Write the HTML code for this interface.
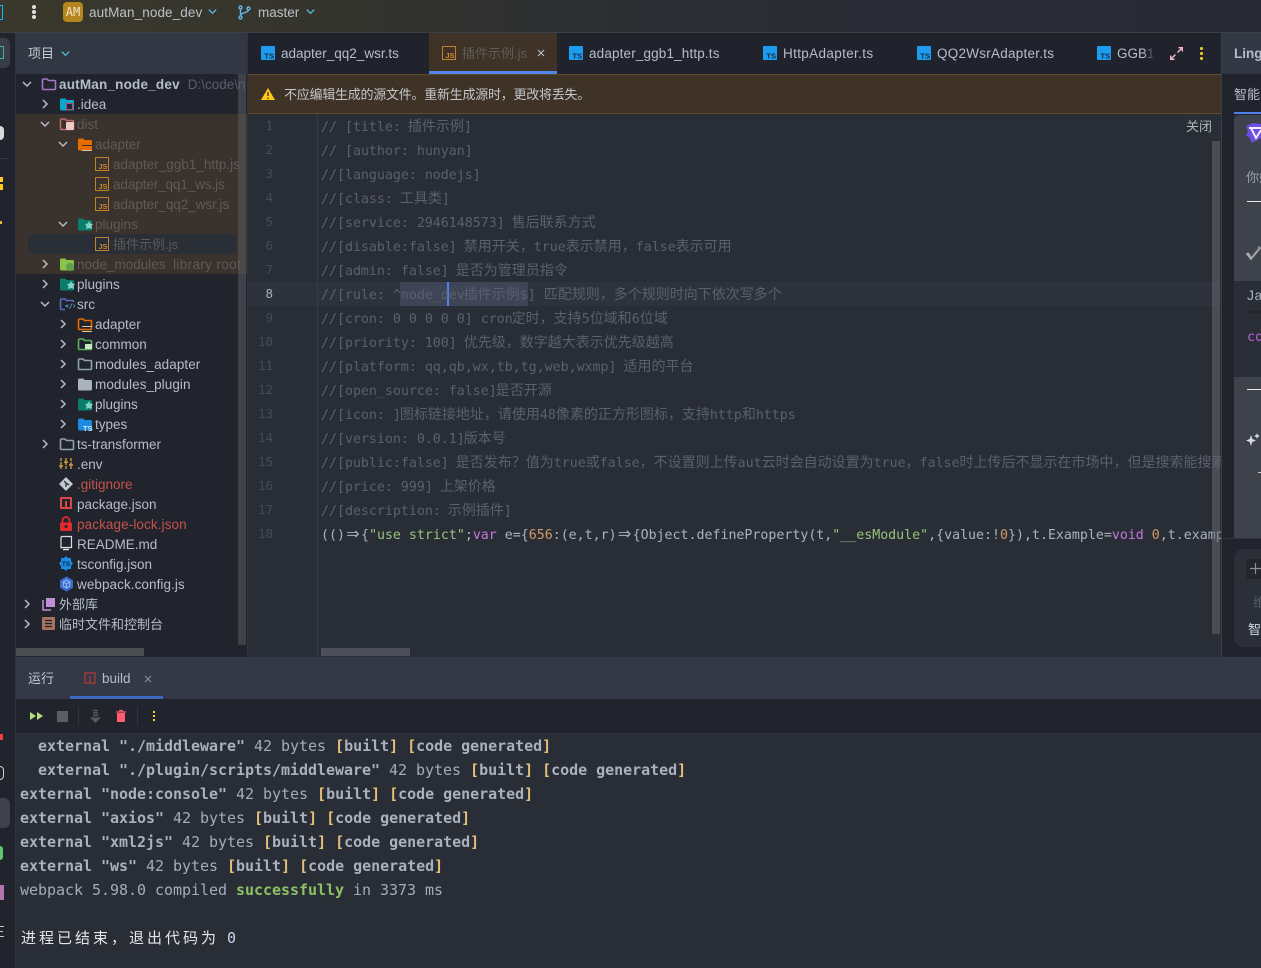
<!DOCTYPE html>
<html lang="zh"><head><meta charset="utf-8"><title>autMan_node_dev</title>
<style>
*{box-sizing:border-box;margin:0;padding:0}
html,body{width:1261px;height:968px;overflow:hidden;background:#21242c}
body{position:relative;font-family:"Liberation Sans","Noto Sans CJK SC",sans-serif;font-size:13.5px;color:#b6bdca}
.a{position:absolute}
.t{position:absolute;white-space:pre;height:22px;line-height:22px}
svg{position:absolute;display:block;overflow:visible}
.d{color:#5d5b59}
.red{color:#c4534c}
.cd{position:absolute;left:321px;margin-top:4px;height:24px;line-height:24px;white-space:pre;font-family:"DejaVu Sans Mono","Noto Sans CJK SC",monospace;font-size:13.28px;color:#5a606c}
.cd i{font-style:normal;font-family:"Noto Sans CJK SC",sans-serif;font-size:14px;line-height:0}
.cd i:first-of-type{margin-left:-1px}
.ar{display:inline-block;width:16px;text-align:center;font-family:"DejaVu Sans",sans-serif;font-size:16px;line-height:0}
.n{position:absolute;left:248px;width:25px;text-align:right;height:24px;line-height:24px;font-family:"DejaVu Sans Mono",monospace;font-size:12.5px;color:#464c58}
.con{position:absolute;left:20px;height:24px;line-height:24px;white-space:pre;font-family:"DejaVu Sans Mono","Noto Sans CJK SC",monospace;font-size:15px;letter-spacing:-.03px;color:#a5acb8}
.con b{color:#aab1bd}
.con u{text-decoration:none;font-weight:bold;color:#e5c07b}
.tab{position:absolute;top:43px;height:22px;line-height:22px;white-space:pre;color:#b6bdca;font-size:13.5px}
.s{color:#98c379}.k{color:#c678dd}.m{color:#d19a66}.p{color:#abb2bf}
</style></head><body>
<svg width="0" height="0" style="position:absolute">
<defs>
<symbol id="r" viewBox="0 0 12 12"><path d="M4 2l4 4-4 4" fill="none" stroke="#b6bdca" stroke-width="1.5"/></symbol>
<symbol id="v" viewBox="0 0 12 12"><path d="M2 4l4 4 4-4" fill="none" stroke="#b6bdca" stroke-width="1.5"/></symbol>
<symbol id="fo" viewBox="0 0 16 16"><path d="M1.5 4a1 1 0 0 1 1-1h3.5l1.5 1.500h6a1 1 0 0 1 1 1v7a1 1 0 0 1-1 1h-11a1 1 0 0 1-1-1z" fill="none" stroke="currentColor" stroke-width="1.6"/></symbol>
<symbol id="ff" viewBox="0 0 16 16"><path d="M1 4a1.500 1.500 0 0 1 1.500-1.500h3.700l1.500 1.500h5.800a1.500 1.500 0 0 1 1.500 1.500v7.500a1.500 1.500 0 0 1-1.500 1.500h-11a1.500 1.500 0 0 1-1.500-1.500z" fill="currentColor"/></symbol>
<symbol id="ts" viewBox="0 0 14 14"><rect width="14" height="14" rx="1" fill="#1c9cf0"/><text x="13" y="12.500" text-anchor="end" font-family="Liberation Sans" font-weight="bold" font-size="7.500" fill="#1b2a3a">TS</text></symbol>
<symbol id="js" viewBox="0 0 14 14"><rect x=".5" y=".5" width="13" height="13" fill="none" stroke="#c0802c"/><text x="12.500" y="12" text-anchor="end" font-family="Liberation Sans" font-weight="bold" font-size="7.500" fill="#c98a30">JS</text></symbol>
<symbol id="pl" viewBox="0 0 16 16"><path d="M1 4a1.500 1.500 0 0 1 1.500-1.500h3.700l1.500 1.500h5.800a1.500 1.500 0 0 1 1.500 1.500v7.500a1.500 1.500 0 0 1-1.500 1.500h-11a1.500 1.500 0 0 1-1.500-1.500z" fill="#0b7d6b"/><path d="M12 5l1.300 2.500 2.700.5-1.500 2 .5 3-3-1-3 1 .5-3-1.500-2 2.700-.5z" fill="#7fd6c2"/></symbol>
</defs></svg>

<!-- top bar -->
<div class="a" style="left:0;top:0;width:1261px;height:32px;background:linear-gradient(90deg,#3a382d 0,#35352d 300px,#2a2d34 700px,#272a33 100%)"></div>
<div class="a" style="left:0;top:32px;width:1261px;height:1px;background:#3c3f46"></div>
<div class="a" style="left:0;top:5px;width:3px;height:15px;border:1px solid #08b8ff;border-left:0"></div>
<div class="a" style="left:32px;top:5px;width:4px;height:4px;border-radius:2px;background:#e0e0e0"></div>
<div class="a" style="left:32px;top:10px;width:4px;height:4px;border-radius:2px;background:#e0e0e0"></div>
<div class="a" style="left:32px;top:15px;width:4px;height:4px;border-radius:2px;background:#e0e0e0"></div>
<div class="a" style="left:63px;top:2px;width:20px;height:20px;border-radius:4px;background:#b5861f;color:#f1e6c8;font:12px/20px 'DejaVu Sans Mono',monospace;text-align:center">AM</div>
<div class="t" style="left:89px;top:2px;color:#bcc0c6;letter-spacing:.1px">autMan_node_dev</div>
<svg style="left:207px;top:6px" width="11" height="11" viewBox="0 0 12 12"><path d="M2 4l4 4 4-4" fill="none" stroke="#56b6d8" stroke-width="1.500"/></svg>
<svg style="left:238px;top:5px" width="13" height="15" viewBox="0 0 13 15"><g fill="none" stroke="#62b5e5" stroke-width="1.400"><circle cx="2.500" cy="2.500" r="1.500"/><circle cx="2.500" cy="12.500" r="1.500"/><circle cx="10.500" cy="3.500" r="1.500"/><path d="M2.500 4v7M10.500 5c0 3-8 2-8 6"/></g></svg>
<div class="t" style="left:258px;top:2px;color:#bcc0c6">master</div>
<svg style="left:305px;top:6px" width="11" height="11" viewBox="0 0 12 12"><path d="M2 4l4 4 4-4" fill="none" stroke="#56b6d8" stroke-width="1.500"/></svg>

<!-- left strip -->
<div class="a" style="left:0;top:33px;width:16px;height:935px;background:#21242c;border-right:1px solid #30333b"></div>
<div class="a" style="left:0;top:38px;width:10px;height:30px;border-radius:0 6px 6px 0;background:#383d47"></div>
<div class="a" style="left:0;top:46px;width:4px;height:13px;border:1.500px solid #3fb0a6;border-left:0"></div>
<div class="a" style="left:0;top:126px;width:4px;height:14px;border-radius:0 7px 7px 0;background:#d9d9d9"></div>
<div class="a" style="left:0;top:158px;width:7px;height:1px;background:#3a3d45"></div>
<div class="a" style="left:0;top:177px;width:3px;height:5px;background:#ffc91a"></div>
<div class="a" style="left:0;top:184px;width:3px;height:6px;background:#ffc91a"></div>
<div class="a" style="left:0;top:221px;width:2px;height:3px;background:#e2c038"></div>
<div class="a" style="left:0;top:734px;width:3px;height:6px;background:#f03c3c"></div>
<div class="a" style="left:0;top:766px;width:4px;height:14px;border:1.500px solid #cfcfcf;border-left:0;border-radius:0 5px 5px 0"></div>
<div class="a" style="left:0;top:798px;width:10px;height:30px;border-radius:0 6px 6px 0;background:#3e424b"></div>
<div class="a" style="left:0;top:846px;width:3px;height:14px;border-radius:0 5px 5px 0;background:#62c46c"></div>
<div class="a" style="left:0;top:885px;width:4px;height:15px;background:#b276ad"></div>
<div class="a" style="left:0;top:926px;width:4px;height:1px;background:#c8c8c8"></div>
<div class="a" style="left:0;top:931px;width:3px;height:1px;background:#c8c8c8"></div>
<div class="a" style="left:0;top:936px;width:4px;height:1px;background:#c8c8c8"></div>

<!-- project panel -->
<div class="a" style="left:16px;top:33px;width:231px;height:41px;background:#313743"></div>
<div class="t" style="left:28px;top:43px;color:#c3c9d3;font-size:13px">项目</div>
<svg style="left:60px;top:48px" width="11" height="11" viewBox="0 0 12 12"><path d="M2 4l4 4 4-4" fill="none" stroke="#4fb6c9" stroke-width="1.500"/></svg>
<div class="a" style="left:16px;top:74px;width:232px;height:583px;background:#21242c"></div>
<div class="a" style="left:16px;top:114px;width:231px;height:160px;background:#3a322c"></div>
<div class="a" style="left:28px;top:234px;width:208px;height:20px;border-radius:6px;background:#2a2e37"></div>

<svg style="left:21px;top:78px" width="12" height="12"><use href="#v"/></svg>
<svg style="left:41px;top:76px;color:#a678c6" width="16" height="16"><use href="#fo"/></svg>
<div class="a" style="left:59px;top:74px;width:188px;height:22px;overflow:hidden;white-space:pre;line-height:22px"><b style="color:#b6bdca;letter-spacing:.2px">autMan_node_dev</b><span style="color:#595e69;margin-left:8px">D:\code\n</span></div>

<svg style="left:39px;top:98px" width="12" height="12"><use href="#r"/></svg>
<svg style="left:59px;top:96px;color:#08a8cc" width="16" height="16"><use href="#ff"/></svg>
<div class="a" style="left:66px;top:103px;width:7px;height:7px;background:#1a2a3c;border:1px solid #d04060"></div>
<div class="t" style="left:77px;top:94px">.idea</div>

<svg style="left:39px;top:118px" width="12" height="12"><use href="#v"/></svg>
<svg style="left:59px;top:116px;color:#c96a6a" width="16" height="16"><use href="#fo"/></svg>
<div class="a" style="left:66px;top:122px;width:8px;height:8px;background:#f0c8c8;border-radius:1px"></div>
<div class="t d" style="left:77px;top:114px">dist</div>

<svg style="left:57px;top:138px" width="12" height="12"><use href="#v"/></svg>
<svg style="left:77px;top:136px;color:#e86c00" width="16" height="16"><use href="#ff"/></svg>
<div class="a" style="left:82px;top:145px;width:10px;height:6px;border-bottom:1px solid #d9c7a8;border-top:1px solid #3a322c"></div>
<div class="t d" style="left:95px;top:134px">adapter</div>

<svg style="left:95px;top:157px" width="14" height="14"><use href="#js"/></svg>
<div class="t d" style="left:113px;top:154px">adapter_ggb1_http.js</div>
<svg style="left:95px;top:177px" width="14" height="14"><use href="#js"/></svg>
<div class="t d" style="left:113px;top:174px;letter-spacing:-.1px">adapter_qq1_ws.js</div>
<svg style="left:95px;top:197px" width="14" height="14"><use href="#js"/></svg>
<div class="t d" style="left:113px;top:194px;letter-spacing:-.05px">adapter_qq2_wsr.js</div>

<svg style="left:57px;top:218px" width="12" height="12"><use href="#v"/></svg>
<svg style="left:77px;top:216px" width="16" height="16"><use href="#pl"/></svg>
<div class="t d" style="left:95px;top:214px">plugins</div>

<svg style="left:95px;top:237px" width="14" height="14"><use href="#js"/></svg>
<div class="t d" style="left:113px;top:234px;font-size:13px">插件示例.js</div>

<svg style="left:39px;top:258px" width="12" height="12"><use href="#r"/></svg>
<svg style="left:59px;top:256px;color:#8bc34a" width="16" height="16"><use href="#ff"/></svg>
<div class="a" style="left:66px;top:263px;width:8px;height:8px;border-radius:4px;background:#5f9e4a"></div>
<div class="t d" style="left:77px;top:254px">node_modules  <span style="letter-spacing:.35px">library root</span></div>

<svg style="left:39px;top:278px" width="12" height="12"><use href="#r"/></svg>
<svg style="left:59px;top:276px" width="16" height="16"><use href="#pl"/></svg>
<div class="t" style="left:77px;top:274px">plugins</div>

<svg style="left:39px;top:298px" width="12" height="12"><use href="#v"/></svg>
<svg style="left:59px;top:296px;color:#5c6bc0" width="16" height="16"><use href="#fo"/></svg>
<div class="a" style="left:65px;top:302px;width:10px;overflow:hidden;text-align:center;font:bold 6.5px/9px 'DejaVu Sans Mono',monospace;color:#64b5f6;background:#21242c">&lt;/&gt;</div>
<div class="t" style="left:77px;top:294px">src</div>

<svg style="left:57px;top:318px" width="12" height="12"><use href="#r"/></svg>
<svg style="left:77px;top:316px;color:#e86c00" width="16" height="16"><use href="#fo"/></svg>
<div class="a" style="left:82px;top:326px;width:10px;height:6px;border-bottom:1px solid #d9c7a8;border-top:1px solid #d9c7a8"></div>
<div class="t" style="left:95px;top:314px">adapter</div>

<svg style="left:57px;top:338px" width="12" height="12"><use href="#r"/></svg>
<svg style="left:77px;top:336px;color:#5fae5f" width="16" height="16"><use href="#fo"/></svg>
<div class="a" style="left:85px;top:344px;width:7px;height:5px;background:#c5e8c5"></div>
<div class="t" style="left:95px;top:334px">common</div>

<svg style="left:57px;top:358px" width="12" height="12"><use href="#r"/></svg>
<svg style="left:77px;top:356px;color:#90a4ae" width="16" height="16"><use href="#fo"/></svg>
<div class="t" style="left:95px;top:354px;letter-spacing:.07px">modules_adapter</div>

<svg style="left:57px;top:378px" width="12" height="12"><use href="#r"/></svg>
<svg style="left:77px;top:376px;color:#a9b3c0" width="16" height="16"><use href="#ff"/></svg>
<div class="t" style="left:95px;top:374px;letter-spacing:.07px">modules_plugin</div>

<svg style="left:57px;top:398px" width="12" height="12"><use href="#r"/></svg>
<svg style="left:77px;top:396px" width="16" height="16"><use href="#pl"/></svg>
<div class="t" style="left:95px;top:394px">plugins</div>

<svg style="left:57px;top:418px" width="12" height="12"><use href="#r"/></svg>
<svg style="left:77px;top:416px;color:#1b8ae0" width="16" height="16"><use href="#ff"/></svg>
<svg style="left:83px;top:423px" width="10" height="9"><text x="0" y="8" font-family="Liberation Sans" font-weight="bold" font-size="7.500" fill="#cfe8fb">TS</text></svg>
<div class="t" style="left:95px;top:414px">types</div>

<svg style="left:39px;top:438px" width="12" height="12"><use href="#r"/></svg>
<svg style="left:59px;top:436px;color:#90a4ae" width="16" height="16"><use href="#fo"/></svg>
<div class="t" style="left:77px;top:434px">ts-transformer</div>

<svg style="left:59px;top:457px" width="14" height="14" viewBox="0 0 14 14"><path d="M2 1v12M7 1v12M12 1v12" stroke="#d9a441" stroke-width="1.300" stroke-dasharray="3 1"/><path d="M0 9h4M5 5h4M10 8h4" stroke="#d9a441" stroke-width="1.500"/></svg>
<div class="t" style="left:77px;top:454px">.env</div>

<svg style="left:59px;top:477px" width="14" height="14" viewBox="0 0 14 14"><path d="M7 0l7 7-7 7-7-7z" fill="#c5cbd3"/><path d="M5 4l2 2v4M7 6l3 2" stroke="#21242c" stroke-width="1.200" fill="none"/></svg>
<div class="t red" style="left:77px;top:474px">.gitignore</div>

<svg style="left:60px;top:497px" width="12" height="12" viewBox="0 0 12 12"><rect x="1" y="1" width="10" height="10" fill="none" stroke="#d84848" stroke-width="2"/><path d="M6 4v7" stroke="#d84848" stroke-width="2"/></svg>
<div class="t" style="left:77px;top:494px">package.json</div>

<svg style="left:59px;top:516px" width="14" height="15" viewBox="0 0 14 15"><path d="M3.500 7V4.500a3.500 3.500 0 0 1 7 0V7" fill="none" stroke="#e02b2b" stroke-width="1.800"/><rect x="1" y="6.500" width="12" height="8.500" rx="1" fill="#e02b2b"/><circle cx="7" cy="10.500" r="1.500" fill="#21242c"/></svg>
<div class="t red" style="left:77px;top:514px;letter-spacing:.1px">package-lock.json</div>

<svg style="left:60px;top:536px" width="12" height="15" viewBox="0 0 12 15"><path d="M1 1.500a1 1 0 0 1 1-1h9.500v11H2a1 1 0 0 0-1 1z" fill="none" stroke="#d8dde4" stroke-width="1.200"/><path d="M3 13.500h6" stroke="#d8dde4" stroke-width="1.500"/></svg>
<div class="t" style="left:77px;top:534px">README.md</div>

<svg style="left:59px;top:556px" width="14" height="15" viewBox="0 0 14 15"><path d="M7 0l2 2h3v3l2 2.500-2 2.500v3H9l-2 2-2-2H2v-3L0 7.500 2 5V2h3z" fill="#1b8ae0"/><text x="7" y="10" text-anchor="middle" font-family="Liberation Sans" font-weight="bold" font-size="6.500" fill="#0a2a44">TS</text></svg>
<div class="t" style="left:77px;top:554px">tsconfig.json</div>

<svg style="left:59px;top:576px" width="15" height="16" viewBox="0 0 15 16"><path d="M7.500 .5l6.500 3.700v7.600l-6.500 3.700L1 11.800V4.200z" fill="#3a6cd0"/><path d="M7.500 4l3.300 1.900v4.200L7.500 12l-3.300-1.900V5.900zM4.200 5.900l3.300 2 3.300-2M7.500 7.900V12" fill="none" stroke="#a9c6f5" stroke-width=".9"/></svg>
<div class="t" style="left:77px;top:574px;letter-spacing:.07px">webpack.config.js</div>

<svg style="left:21px;top:598px" width="12" height="12"><use href="#r"/></svg>
<svg style="left:42px;top:597px" width="14" height="14" viewBox="0 0 14 14"><path d="M1 3v10h8" fill="none" stroke="#c28fd6" stroke-width="1.500"/><path d="M4 1h9v9H4z" fill="#c28fd6"/></svg>
<div class="t" style="left:59px;top:594px;font-size:13px">外部库</div>

<svg style="left:21px;top:618px" width="12" height="12"><use href="#r"/></svg>
<svg style="left:42px;top:617px" width="13" height="13" viewBox="0 0 13 13"><rect width="13" height="13" rx="1" fill="#a5725e"/><path d="M3 3.500h7M3 6.500h7M3 9.500h7" stroke="#21242c" stroke-width="1.300"/></svg>
<div class="t" style="left:59px;top:614px;font-size:13px">临时文件和控制台</div>

<!-- project scrollbars -->
<div class="a" style="left:238px;top:74px;width:8px;height:571px;background:rgba(90,93,99,.5)"></div>
<div class="a" style="left:16px;top:648px;width:128px;height:8px;background:#4c4e52"></div>
<div class="a" style="left:247px;top:33px;width:1px;height:624px;background:#30333b"></div>

<!-- tabs -->
<div class="a" style="left:248px;top:33px;width:974px;height:41px;background:#20232b"></div>
<div class="a" style="left:429px;top:33px;width:128px;height:41px;background:#3f3226"></div>
<div class="a" style="left:429px;top:71px;width:128px;height:3px;background:#5285e8"></div>
<svg style="left:261px;top:46px" width="14" height="14"><use href="#ts"/></svg>
<div class="tab" style="left:281px">adapter_qq2_wsr.ts</div>
<svg style="left:442px;top:46px" width="14" height="14"><use href="#js"/></svg>
<div class="tab" style="left:462px;color:#5f5d5b;font-size:13px">插件示例.js</div>
<svg style="left:537px;top:49px" width="8" height="8" viewBox="0 0 8 8"><path d="M1 1l6 6M7 1l-6 6" stroke="#b6bdca" stroke-width="1.100"/></svg>
<svg style="left:569px;top:46px" width="14" height="14"><use href="#ts"/></svg>
<div class="tab" style="left:589px;letter-spacing:.15px">adapter_ggb1_http.ts</div>
<svg style="left:763px;top:46px" width="14" height="14"><use href="#ts"/></svg>
<div class="tab" style="left:783px;letter-spacing:.35px">HttpAdapter.ts</div>
<svg style="left:917px;top:46px" width="14" height="14"><use href="#ts"/></svg>
<div class="tab" style="left:937px;letter-spacing:.25px">QQ2WsrAdapter.ts</div>
<svg style="left:1097px;top:46px" width="14" height="14"><use href="#ts"/></svg>
<div class="tab" style="left:1117px;width:38px;overflow:hidden;-webkit-mask-image:linear-gradient(90deg,#000 70%,transparent)">GGB1Http</div>
<svg style="left:1170px;top:47px" width="13" height="13" viewBox="0 0 13 13"><path d="M7.500 5.500L12 1M8.500 .7h3.800v3.800M5.500 7.500L1 12M4.500 12.300H.7V8.500" fill="none" stroke="#f4b8c8" stroke-width="1.400"/></svg>
<div class="a" style="left:1200px;top:47px;width:3px;height:3px;border-radius:2px;background:#ffd21f"></div>
<div class="a" style="left:1200px;top:52px;width:3px;height:3px;border-radius:2px;background:#ffd21f"></div>
<div class="a" style="left:1200px;top:57px;width:3px;height:3px;border-radius:2px;background:#ffd21f"></div>

<!-- banner -->
<div class="a" style="left:248px;top:74px;width:974px;height:40px;background:#3f3226;border-top:1px solid #5e4b30;border-bottom:1px solid #5e4b30"></div>
<svg style="left:261px;top:87px" width="14" height="14" viewBox="0 0 14 14"><path d="M7 1l7 12H0z" fill="#ffc91a"/><path d="M7 5v4M7 10.500v1.500" stroke="#3f3226" stroke-width="1.400"/></svg>
<div class="t" style="left:284px;top:84px;font-size:13px;letter-spacing:-.25px;color:#c3c6ca">不应编辑生成的源文件。重新生成源时，更改将丢失。</div>

<!-- editor -->
<div class="a" style="left:248px;top:114px;width:974px;height:543px;background:#292d36"></div>
<div class="a" style="left:248px;top:282px;width:974px;height:24px;background:#2e323c"></div>
<div class="a" style="left:317px;top:114px;width:1px;height:543px;background:#373b44"></div>
<div class="a" style="left:400px;top:282px;width:128px;height:24px;background:#3e4557"></div>
<div class="a" style="left:447px;top:282px;width:2px;height:24px;background:#4f82ee"></div>

<div class="n" style="top:114px">1</div><div class="n" style="top:138px">2</div><div class="n" style="top:162px">3</div><div class="n" style="top:186px">4</div><div class="n" style="top:210px">5</div><div class="n" style="top:234px">6</div><div class="n" style="top:258px">7</div><div class="n" style="top:282px;color:#a6adb9">8</div><div class="n" style="top:306px">9</div><div class="n" style="top:330px">10</div><div class="n" style="top:354px">11</div><div class="n" style="top:378px">12</div><div class="n" style="top:402px">13</div><div class="n" style="top:426px">14</div><div class="n" style="top:450px">15</div><div class="n" style="top:474px">16</div><div class="n" style="top:498px">17</div><div class="n" style="top:522px">18</div>

<div class="a" style="left:0;top:0;width:1222px;height:657px;overflow:hidden;pointer-events:none">
<div class="cd" style="top:112px">// [title: <i>插件示例</i>]</div>
<div class="cd" style="top:136px">// [author: hunyan]</div>
<div class="cd" style="top:160px">//[language: nodejs]</div>
<div class="cd" style="top:184px">//[class: <i>工具类</i>]</div>
<div class="cd" style="top:208px">//[service: 2946148573] <i>售后联系方式</i></div>
<div class="cd" style="top:232px">//[disable:false] <i>禁用开关，</i>true<i>表示禁用，</i>false<i>表示可用</i></div>
<div class="cd" style="top:256px">//[admin: false] <i>是否为管理员指令</i></div>
<div class="cd" style="top:280px">//[rule: ^node_dev<i>插件示例</i>$] <i>匹配规则，多个规则时向下依次写多个</i></div>
<div class="cd" style="top:304px">//[cron: 0 0 0 0 0] cron<i>定时，支持</i>5<i>位域和</i>6<i>位域</i></div>
<div class="cd" style="top:328px">//[priority: 100] <i>优先级，数字越大表示优先级越高</i></div>
<div class="cd" style="top:352px">//[platform: qq,qb,wx,tb,tg,web,wxmp] <i>适用的平台</i></div>
<div class="cd" style="top:376px">//[open_source: false]<i>是否开源</i></div>
<div class="cd" style="top:400px">//[icon: ]<i>图标链接地址，请使用</i>48<i>像素的正方形图标，支持</i>http<i>和</i>https</div>
<div class="cd" style="top:424px">//[version: 0.0.1]<i>版本号</i></div>
<div class="cd" style="top:448px">//[public:false] <i>是否发布？值为</i>true<i>或</i>false<i>，不设置则上传</i>aut<i>云时会自动设置为</i>true<i>，</i>false<i>时上传后不显示在市场中，但是搜索能搜索到</i></div>
<div class="cd" style="top:472px">//[price: 999] <i>上架价格</i></div>
<div class="cd" style="top:496px">//[description: <i>示例插件</i>]</div>
<div class="cd p" style="top:520px">(()<span class="ar">⇒</span>{<span class="s">"use strict"</span>;<span class="k">var</span> e={<span class="m">656</span>:(e,t,r)<span class="ar">⇒</span>{Object.defineProperty(t,<span class="s">"__esModule"</span>,{value:!<span class="m">0</span>}),t.Example=<span class="k">void</span> <span class="m">0</span>,t.example=t.Example</div>
</div>

<div class="t" style="left:1186px;top:116px;font-size:13px;color:#b0b5bc">关闭</div>
<div class="a" style="left:1212px;top:141px;width:8px;height:493px;background:rgba(100,102,106,.58)"></div>
<div class="a" style="left:321px;top:648px;width:89px;height:8px;background:#4d5058"></div>
<div class="a" style="left:1221px;top:33px;width:1px;height:624px;background:#3a3d45"></div>

<!-- right panel -->
<div class="a" style="left:1222px;top:33px;width:39px;height:41px;background:#313743"></div>
<div class="a" style="left:1222px;top:74px;width:39px;height:583px;background:#21242c"></div>
<div class="t" style="left:1234px;top:43px;font-weight:bold;color:#b6bdca">Ling</div>
<div class="t" style="left:1234px;top:84px;font-size:13px;color:#b6bdca">智能</div>
<div class="a" style="left:1234px;top:112px;width:27px;height:2px;background:#4f7fe8"></div>
<div class="a" style="left:1234px;top:115px;width:27px;height:423px;background:#292d36"></div>
<div class="a" style="left:1234px;top:115px;width:27px;height:166px;background:#3e424b;border-radius:6px 0 0 0"></div>
<svg style="left:1246px;top:122px" width="15" height="22" viewBox="0 0 15 22"><path d="M7 1l8 1v14l-9 5-3-6-3-1 2-5-2-5z" fill="#6a4fe0"/><path d="M3 6h12M5 6l5 10 5-8" fill="none" stroke="#f0ecff" stroke-width="2"/></svg>
<div class="t" style="left:1246px;top:167px;font-size:13px;color:#9aa0aa;width:15px;overflow:hidden">你好</div>
<div class="a" style="left:1247px;top:201px;width:14px;height:1px;background:#e6e6e6"></div>
<svg style="left:1246px;top:245px" width="15" height="15" viewBox="0 0 15 15"><path d="M1 8l4 5 9-11" fill="none" stroke="#a6abb2" stroke-width="3"/><path d="M4.500 9.500L5.500 11l7-8.500" fill="none" stroke="#3e424b" stroke-width="1"/></svg>
<div class="t" style="left:1247px;top:284px;font-size:14px;color:#aab0ba;width:14px;overflow:hidden;letter-spacing:.5px">Java</div>
<div class="a" style="left:1247px;top:311px;width:14px;height:2px;background:#23262d"></div>
<div class="t" style="left:1247px;top:326px;font:13.5px/22px 'DejaVu Sans Mono',monospace;color:#b565d8">co</div>
<div class="a" style="left:1234px;top:377px;width:27px;height:161px;background:#3e424b"></div>
<div class="a" style="left:1247px;top:389px;width:14px;height:1px;background:#e6e6e6"></div>
<svg style="left:1246px;top:433px" width="15" height="14" viewBox="0 0 15 14"><path d="M5 2l1.300 4L10 7.500 6.300 9 5 13 3.700 9 0 7.500 3.700 6zM11 0l.8 2L14 3l-2.200 1-.8 2-.8-2L8 3l2.200-1z" fill="#d8dce8"/></svg>
<div class="a" style="left:1258px;top:472px;width:3px;height:1px;background:#c8c8c8"></div>
<div class="a" style="left:1222px;top:538px;width:39px;height:1px;background:#30333b"></div>
<div class="a" style="left:1234px;top:549px;width:27px;height:98px;border-radius:10px 0 0 10px;background:#2b2f37"></div>
<div class="a" style="left:1246px;top:559px;width:15px;height:20px;border-radius:3px 0 0 3px;background:#23262d"></div>
<svg style="left:1250px;top:563px" width="11" height="11" viewBox="0 0 11 11"><path d="M5.500 0v11M0 5.500h11" stroke="#8c9199" stroke-width="1.200"/></svg>
<div class="t" style="left:1253px;top:592px;font-size:13px;color:#565b65;width:8px;overflow:hidden">维</div>
<div class="t" style="left:1248px;top:619px;font-size:13px;color:#cdd6e2;width:13px;overflow:hidden">智能</div>

<!-- bottom panel -->
<div class="a" style="left:16px;top:657px;width:1245px;height:42px;background:#333946"></div>
<div class="t" style="left:28px;top:668px;font-size:13px;color:#c3c9d3">运行</div>
<svg style="left:84px;top:672px" width="12" height="12" viewBox="0 0 12 12"><rect x="1" y="1" width="10" height="10" fill="none" stroke="#86383f" stroke-width="2"/><path d="M6 4v7" stroke="#86383f" stroke-width="2"/></svg>
<div class="t" style="left:102px;top:668px;color:#b6bdca">build</div>
<svg style="left:144px;top:675px" width="8" height="8" viewBox="0 0 8 8"><path d="M1 1l6 6M7 1l-6 6" stroke="#8b919c" stroke-width="1.100"/></svg>
<div class="a" style="left:70px;top:696px;width:93px;height:3px;background:#3d69bc"></div>

<div class="a" style="left:16px;top:699px;width:1245px;height:34px;background:#21242c"></div>
<div class="a" style="left:16px;top:733px;width:1245px;height:1px;background:#33363e"></div>
<svg style="left:30px;top:711px" width="13" height="10" viewBox="0 0 13 10"><path d="M0 1l6 4-6 4zM7 1l6 4-6 4z" fill="#b8e07a"/></svg>
<div class="a" style="left:57px;top:711px;width:11px;height:11px;background:#5a5d62"></div>
<div class="a" style="left:78px;top:706px;width:1px;height:20px;background:#33363e"></div>
<svg style="left:90px;top:710px" width="11" height="13" viewBox="0 0 11 13"><path d="M3 .5h5M3 3h5M3 5.500h5" stroke="#56595f" stroke-width="1.500"/><path d="M0 7.500h11L5.500 13z" fill="#56595f"/></svg>
<svg style="left:116px;top:710px" width="10" height="12" viewBox="0 0 10 12"><path d="M3 .5h4M0 2h10" stroke="#ff5c72" stroke-width="1.300"/><path d="M1 3h8v9H1z" fill="#ff5c72"/></svg>
<div class="a" style="left:137px;top:706px;width:1px;height:20px;background:#33363e"></div>
<div class="a" style="left:153px;top:711px;width:2px;height:2px;background:#ffd21f"></div>
<div class="a" style="left:153px;top:715px;width:2px;height:2px;background:#ffd21f"></div>
<div class="a" style="left:153px;top:719px;width:2px;height:2px;background:#ffd21f"></div>

<div class="a" style="left:16px;top:734px;width:1245px;height:234px;background:#292d36"></div>
<div class="con" style="top:734px"><b>  external "./middleware"</b> 42 bytes <u>[</u><b>built</b><u>]</u> <u>[</u><b>code generated</b><u>]</u></div>
<div class="con" style="top:758px"><b>  external "./plugin/scripts/middleware"</b> 42 bytes <u>[</u><b>built</b><u>]</u> <u>[</u><b>code generated</b><u>]</u></div>
<div class="con" style="top:782px"><b>external "node:console"</b> 42 bytes <u>[</u><b>built</b><u>]</u> <u>[</u><b>code generated</b><u>]</u></div>
<div class="con" style="top:806px"><b>external "axios"</b> 42 bytes <u>[</u><b>built</b><u>]</u> <u>[</u><b>code generated</b><u>]</u></div>
<div class="con" style="top:830px"><b>external "xml2js"</b> 42 bytes <u>[</u><b>built</b><u>]</u> <u>[</u><b>code generated</b><u>]</u></div>
<div class="con" style="top:854px"><b>external "ws"</b> 42 bytes <u>[</u><b>built</b><u>]</u> <u>[</u><b>code generated</b><u>]</u></div>
<div class="con" style="top:878px">webpack 5.98.0 compiled <b style="color:#8cc265">successfully</b> in 3373 ms</div>
<div class="con" style="left:21px;top:926px;color:#e4e6ea;letter-spacing:3px;font-family:'Noto Sans CJK SC',sans-serif">进程已结束，退出代码为<span style="font-family:'DejaVu Sans Mono',monospace;letter-spacing:0;color:#c8d8f0;margin-left:-1px"> 0</span></div>
</body></html>
